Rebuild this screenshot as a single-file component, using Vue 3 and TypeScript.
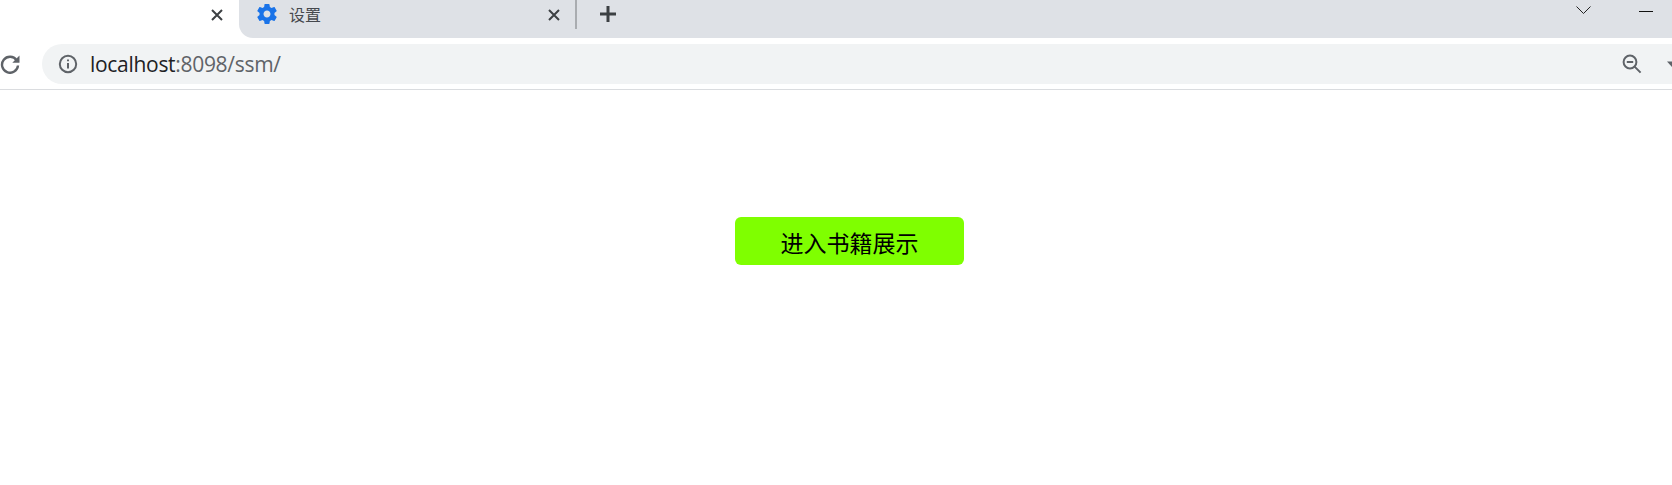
<template>
  <div class="browser">
    <header class="tabstrip">
      <div class="tab tab--active">
        <svg class="close" viewBox="0 0 14 14"><path d="M2 2l10 10M12 2L2 12" /></svg>
      </div>
      <div class="strip-rest">
        <div class="tab tab--settings">
          <svg class="gear" viewBox="0 0 24 24">
            <path d="M19.43 12.98c.04-.32.07-.64.07-.98s-.03-.66-.07-.98l2.11-1.65c.19-.15.24-.42.12-.64l-2-3.46c-.12-.22-.39-.3-.61-.22l-2.49 1c-.52-.4-1.08-.73-1.69-.98l-.38-2.65A.488.488 0 0 0 14 2h-4c-.25 0-.46.18-.49.42l-.38 2.65c-.61.25-1.17.59-1.69.98l-2.49-1c-.23-.09-.49 0-.61.22l-2 3.46c-.13.22-.07.49.12.64l2.11 1.65c-.04.32-.07.65-.07.98s.03.66.07.98l-2.11 1.65c-.19.15-.24.42-.12.64l2 3.46c.12.22.39.3.61.22l2.49-1c.52.4 1.08.73 1.69.98l.38 2.65c.03.24.24.42.49.42h4c.25 0 .46-.18.49-.42l.38-2.65c.61-.25 1.17-.59 1.69-.98l2.49 1c.23.09.49 0 .61-.22l2-3.46c.12-.22.07-.49-.12-.64l-2.11-1.65zM12 15.5c-1.93 0-3.5-1.57-3.5-3.5s1.57-3.5 3.5-3.5 3.5 1.57 3.5 3.5-1.57 3.5-3.5 3.5z" />
          </svg>
          <span class="tab__title">设置</span>
          <svg class="close" viewBox="0 0 14 14"><path d="M2 2l10 10M12 2L2 12" /></svg>
        </div>
        <span class="tab-sep"></span>
        <svg class="plus" viewBox="0 0 18 18"><path d="M9 1v16M1 9h16" /></svg>
        <div class="window-controls">
          <svg class="chevron" viewBox="0 0 15 9"><path d="M.5.5l7 7 7-7" /></svg>
          <span class="minimize"></span>
        </div>
      </div>
    </header>

    <div class="toolbar">
      <svg class="reload" viewBox="0 0 20 20">
        <path class="reload__arc" d="M16.6 6.2A8 8 0 1 0 18 11.5" />
        <path class="reload__tip" d="M19.5 1.5v7.2h-7.2z" />
      </svg>
      <div class="omnibox">
        <svg class="info" viewBox="0 0 20 20">
          <circle cx="10" cy="10" r="8.2" />
          <path d="M10 9v5.5M10 5.4v1.9" />
        </svg>
        <span class="url"><span class="url__host">localhost</span>:8098/ssm/</span>
        <svg class="zoom" viewBox="0 0 20 20">
          <circle cx="8" cy="8" r="6.4" />
          <path d="M4.8 8h6.4M12.6 12.6l6 6" />
        </svg>
        <svg class="star" viewBox="0 0 20 20">
          <path d="M0 7.5h20l-10 11z" />
        </svg>
      </div>
    </div>

    <main class="page">
      <a class="enter-btn">进入书籍展示</a>
    </main>
  </div>
</template>

<script setup lang="ts">
</script>

<style>
html,
body {
  background: #fff;
  overflow: hidden;
}
</style>

<style scoped>
.browser {
  width: 1672px;
  height: 485px;
  display: flex;
  flex-direction: column;
  overflow: hidden;
  font-family: "Open Sans", "Noto Sans CJK SC", sans-serif;
}

.tabstrip {
  display: flex;
  height: 38px;
  flex-shrink: 0;
}

.tab {
  display: flex;
  align-items: center;
}

.tab--active {
  width: 239px;
  justify-content: flex-end;
  padding: 0 15px 8px 0;
  box-sizing: border-box;
}

.strip-rest {
  flex: 1;
  display: flex;
  align-items: flex-start;
  background: #dee1e6;
  border-bottom-left-radius: 14px;
}

.tab--settings {
  width: 336px;
  height: 29px;
  padding: 0 14px 0 16px;
  box-sizing: border-box;
}

.gear {
  width: 24px;
  height: 24px;
  margin-top: -1px;
  fill: #1a73e8;
}

.tab__title {
  flex: 1;
  margin: 0 0 2px 10px;
  font-family: "Noto Sans CJK SC", sans-serif;
  font-size: 16px;
  color: #45484d;
}

.close {
  width: 14px;
  height: 14px;
  fill: none;
  stroke: #3c4043;
  stroke-width: 2;
}

.tab-sep {
  width: 2px;
  height: 29px;
  background: #a9acb0;
}

.plus {
  width: 18px;
  height: 18px;
  margin: 5px 0 0 22px;
  fill: none;
  stroke: #3c4043;
  stroke-width: 3;
}

.window-controls {
  margin-left: auto;
  display: flex;
  align-items: center;
  gap: 48px;
  padding: 6px 19px 0 0;
}

.chevron {
  width: 15px;
  height: 9px;
  fill: none;
  stroke: #222;
  stroke-width: 1;
}

.minimize {
  width: 14px;
  height: 1px;
  margin-top: 1px;
  background: #111;
}

.toolbar {
  display: flex;
  align-items: center;
  height: 48px;
  padding: 2px 0 1px;
  border-bottom: 1px solid #dadcdf;
  flex-shrink: 0;
}

.reload {
  width: 20px;
  height: 20px;
  margin: 0 22px 0 0;
  flex-shrink: 0;
}

.reload__arc {
  fill: none;
  stroke: #5f6368;
  stroke-width: 2.4;
}

.reload__tip {
  fill: #5f6368;
}

.omnibox {
  flex: 1;
  display: flex;
  align-items: center;
  height: 40px;
  padding: 0 0 0 16px;
  background: #f1f3f4;
  border-radius: 20px 0 0 20px;
  overflow: hidden;
}

.info {
  width: 20px;
  height: 20px;
  fill: none;
  stroke: #5f6368;
  stroke-width: 2;
}

.url {
  margin-left: 12px;
  font-size: 21px;
  color: #5f6368;
  letter-spacing: -0.3px;
}

.url__host {
  color: #202124;
}

.zoom {
  width: 20px;
  height: 20px;
  margin-left: auto;
  fill: none;
  stroke: #5f6368;
  stroke-width: 2;
}

.star {
  width: 20px;
  height: 20px;
  margin: 0 -15px 0 25px;
  flex-shrink: 0;
  fill: #5f6368;
}

.page {
  flex: 1;
  display: flex;
  align-items: flex-start;
  padding: 127px 0 0 735px;
  background: #fff;
}

.enter-btn {
  display: flex;
  justify-content: center;
  align-items: center;
  width: 229px;
  height: 48px;
  padding-top: 2px;
  box-sizing: border-box;
  background: #7fff00;
  border-radius: 6px;
  color: #000;
  font-family: "Noto Sans CJK SC", sans-serif;
  font-size: 23px;
}
</style>
